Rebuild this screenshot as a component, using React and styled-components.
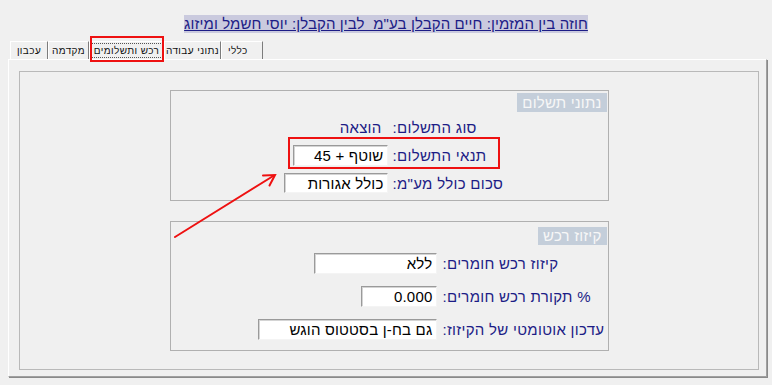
import React from "react";
import styled, { createGlobalStyle } from "styled-components";

const Global = createGlobalStyle`
  html, body { margin: 0; padding: 0; background: #f0f0f0; }
  body { font-family: "Liberation Sans", Arial, sans-serif; }
`;

const Page = styled.div`
  position: relative;
  width: 772px;
  height: 385px;
  background: #f0f0f0;
  overflow: hidden;
`;

const TitleRow = styled.div`
  display: flex;
  justify-content: center;
  padding-top: 15px;
  height: 18px;
`;

const Title = styled.span`
  direction: rtl;
  background: #cacade;
  color: #1c1c86;
  font-size: 15px;
  letter-spacing: 0.1px;
  line-height: 18px;
  text-decoration: underline;
  white-space: pre;
`;

const TabStrip = styled.div`
  display: flex;
  margin-top: 8px;
  padding-left: 10px;
  height: 18px;
`;

const Tab = styled.div`
  box-sizing: border-box;
  width: ${(p) => p.$w}px;
  height: 18px;
  border-left: 1px solid #ffffff;
  border-top: 1px solid #ffffff;
  border-right: 1px solid #7c7c7c;
  display: flex;
  align-items: center;
  justify-content: ${(p) => (p.$align === "left" ? "flex-start" : "center")};
  padding-left: ${(p) => (p.$align === "left" ? "6px" : "0")};
  font-size: 10px;
  letter-spacing: 0.4px;
  color: #111;
  white-space: nowrap;
`;

const TabText = styled.span`
  direction: rtl;
  unicode-bidi: isolate;
`;

const Focus = styled(TabText)`
  border: 1px dotted #555;
  padding: 0 3px;
  line-height: 13px;
`;

const Panel = styled.div`
  box-sizing: border-box;
  margin-left: 8px;
  width: 759px;
  height: 318px;
  border-top: 1px solid #ffffff;
  border-left: 1px solid #ffffff;
  border-right: 1px solid #a0a0a0;
  border-bottom: 1px solid #a0a0a0;
  box-shadow: 1px 1px 0 #8a8a8a;
  padding: 11px 0 0 10px;
`;

const Frame = styled.div`
  box-sizing: border-box;
  width: 740px;
  height: 299px;
  border: 1px solid #b9b9b9;
  display: flex;
  flex-direction: column;
  align-items: center;
  gap: 20px;
  padding-top: 18px;
`;

const Group = styled.div`
  box-sizing: border-box;
  width: 439px;
  height: ${(p) => p.$h}px;
  border: 1px solid #b0b0b0;
  display: flex;
  flex-direction: column;
  padding-top: ${(p) => p.$pt}px;
`;

const BadgeRow = styled.div`
  display: flex;
  justify-content: flex-end;
  padding-right: 1px;
`;

const Badge = styled.div`
  direction: rtl;
  height: ${(p) => p.$h}px;
  line-height: ${(p) => p.$h}px;
  padding: 0 5px 0 5px;
  background: #c4ceda;
  color: #f7f7f7;
  font-size: 15px;
  letter-spacing: 0.2px;
`;

const Rows = styled.div`
  display: grid;
  grid-template-columns: ${(p) => p.$col}px auto;
  grid-auto-rows: ${(p) => p.$rh}px;
  column-gap: ${(p) => p.$gap}px;
  align-items: center;
  margin-top: ${(p) => p.$mt}px;
`;

const Value = styled.div`
  justify-self: end;
  direction: rtl;
  font-size: 15px;
  letter-spacing: 0.25px;
  color: #1c1c86;
  padding-right: 6px;
`;

const Field = styled.div`
  justify-self: end;
  box-sizing: border-box;
  width: ${(p) => p.$w}px;
  height: ${(p) => p.$h || 21}px;
  background: #ffffff;
  border-style: solid;
  border-width: 1px;
  border-color: #9a9a9a #f4f4f4 #f4f4f4 #9a9a9a;
  box-shadow: inset 1px 1px 0 #d4d4d4;
  direction: rtl;
  text-align: right;
  padding: 0 3px 0 4px;
  font-size: 15px;
  letter-spacing: 0.2px;
  line-height: 19px;
  color: #000;
  white-space: nowrap;
  overflow: hidden;
`;

const Label = styled.div`
  justify-self: start;
  direction: rtl;
  font-size: 15px;
  letter-spacing: 0.3px;
  color: #1c1c86;
  white-space: nowrap;
`;

const Highlight = styled.div`
  position: absolute;
  left: ${(p) => p.$x}px;
  top: ${(p) => p.$y}px;
  width: ${(p) => p.$w}px;
  height: ${(p) => p.$h}px;
  box-sizing: border-box;
  border: 2px solid #ee1111;
  pointer-events: none;
`;

const ArrowLayer = styled.svg`
  position: absolute;
  left: 0;
  top: 0;
  pointer-events: none;
`;

export default function App() {
  return (
    <Page>
      <Global />
      <TitleRow>
        <Title>{'חוזה בין המזמין: חיים הקבלן בע"מ  לבין הקבלן: יוסי חשמל ומיזוג'}</Title>
      </TitleRow>
      <TabStrip>
        <Tab $w={38}><TabText>עכבון</TabText></Tab>
        <Tab $w={41}><TabText>מקדמה</TabText></Tab>
        <Tab $w={75}>
          <Focus>רכש ותשלומים</Focus>
        </Tab>
        <Tab $w={57}><TabText>נתוני עבודה</TabText></Tab>
        <Tab $w={42} $align="left"><TabText>כללי</TabText></Tab>
      </TabStrip>
      <Panel>
        <Frame>
          <Group $h={111} $pt={2}>
            <BadgeRow>
              <Badge $h={19}>נתוני תשלום</Badge>
            </BadgeRow>
            <Rows $col={217} $gap={5} $rh={28} $mt={1}>
              <Value>הוצאה</Value>
              <Label>סוג התשלום:</Label>
              <Field $w={95}>שוטף + 45</Field>
              <Label>תנאי התשלום:</Label>
              <Field $w={104} $h={20}>כולל אגורות</Field>
              <Label>{'סכום כולל מע"מ:'}</Label>
            </Rows>
          </Group>
          <Group $h={130} $pt={5}>
            <BadgeRow>
              <Badge $h={18}>קיזוז רכש</Badge>
            </BadgeRow>
            <Rows $col={266} $gap={6} $rh={33} $mt={2}>
              <Field $w={123}>ללא</Field>
              <Label>קיזוז רכש חומרים:</Label>
              <Field $w={76}>0.000</Field>
              <Label>% תקורת רכש חומרים:</Label>
              <Field $w={179}>גם בח-ן בסטטוס הוגש</Field>
              <Label>עדכון אוטומטי של הקיזוז:</Label>
            </Rows>
          </Group>
        </Frame>
      </Panel>

      <Highlight $x={90} $y={36} $w={74} $h={26} />
      <Highlight $x={288} $y={137} $w={212} $h={32} />
      <ArrowLayer width="772" height="385" viewBox="0 0 772 385">
        <g stroke="#ee1111" strokeWidth="2" fill="none" strokeLinecap="round">
          <line x1="175" y1="237" x2="274" y2="175.5" />
          <polyline points="263,175.5 275,175 269.5,185.5" />
        </g>
      </ArrowLayer>
    </Page>
  );
}
